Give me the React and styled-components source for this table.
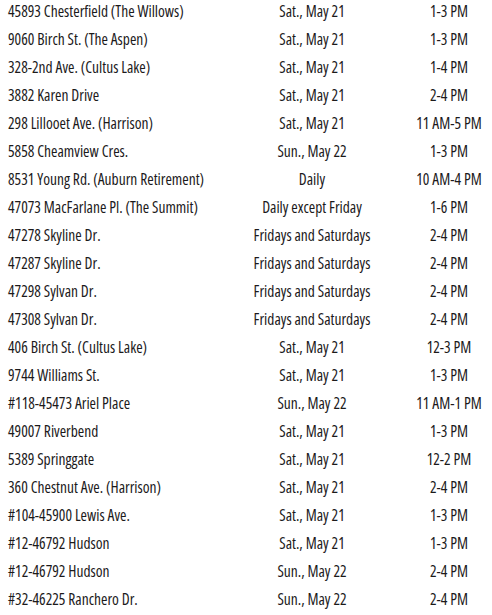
import React from "react";
import styled, { createGlobalStyle } from "styled-components";

const rows = [
  ["45893 Chesterfield (The Willows)", "Sat., May 21", "1-3 PM"],
  ["9060 Birch St. (The Aspen)", "Sat., May 21", "1-3 PM"],
  ["328-2nd Ave. (Cultus Lake)", "Sat., May 21", "1-4 PM"],
  ["3882 Karen Drive", "Sat., May 21", "2-4 PM"],
  ["298 Lillooet Ave. (Harrison)", "Sat., May 21", "11 AM-5 PM"],
  ["5858 Cheamview Cres.", "Sun., May 22", "1-3 PM"],
  ["8531 Young Rd. (Auburn Retirement)", "Daily", "10 AM-4 PM"],
  ["47073 MacFarlane Pl. (The Summit)", "Daily except Friday", "1-6 PM"],
  ["47278 Skyline Dr.", "Fridays and Saturdays", "2-4 PM"],
  ["47287 Skyline Dr.", "Fridays and Saturdays", "2-4 PM"],
  ["47298 Sylvan Dr.", "Fridays and Saturdays", "2-4 PM"],
  ["47308 Sylvan Dr.", "Fridays and Saturdays", "2-4 PM"],
  ["406 Birch St. (Cultus Lake)", "Sat., May 21", "12-3 PM"],
  ["9744 Williams St.", "Sat., May 21", "1-3 PM"],
  ["#118-45473 Ariel Place", "Sun., May 22", "11 AM-1 PM"],
  ["49007 Riverbend", "Sat., May 21", "1-3 PM"],
  ["5389 Springgate", "Sat., May 21", "12-2 PM"],
  ["360 Chestnut Ave. (Harrison)", "Sat., May 21", "2-4 PM"],
  ["#104-45900 Lewis Ave.", "Sat., May 21", "1-3 PM"],
  ["#12-46792 Hudson", "Sat., May 21", "1-3 PM"],
  ["#12-46792 Hudson", "Sun., May 22", "2-4 PM"],
  ["#32-46225 Ranchero Dr.", "Sun., May 22", "2-4 PM"],
];

function App() {
  return (
    <>
      <GlobalStyle />
      <Listing>
        {rows.map(([address, day, time], i) => (
          <Row key={i}>
            <Address>{address}</Address>
            <Day>{day}</Day>
            <Time>{time}</Time>
          </Row>
        ))}
      </Listing>
    </>
  );
}

const GlobalStyle = createGlobalStyle`
  body {
    margin: 0;
    background: #ffffff;
  }
`;

const Listing = styled.div`
  width: 492px;
  margin-top: -3px;
  padding-left: 8px;
  box-sizing: border-box;
  font-family: "Open Sans", "Noto Sans", sans-serif;
  font-stretch: 75%;
  font-size: 15.5px;
  color: #1c1a1b;
`;

const Row = styled.div`
  display: grid;
  grid-template-columns: 242px 124px 1fr;
  height: 28px;
  line-height: 28px;
  white-space: nowrap;
`;

const Address = styled.div`
  text-align: left;
`;

const Day = styled.div`
  text-align: center;
`;

const Time = styled.div`
  padding-left: 32px;
  text-align: center;
`;

export default App;
